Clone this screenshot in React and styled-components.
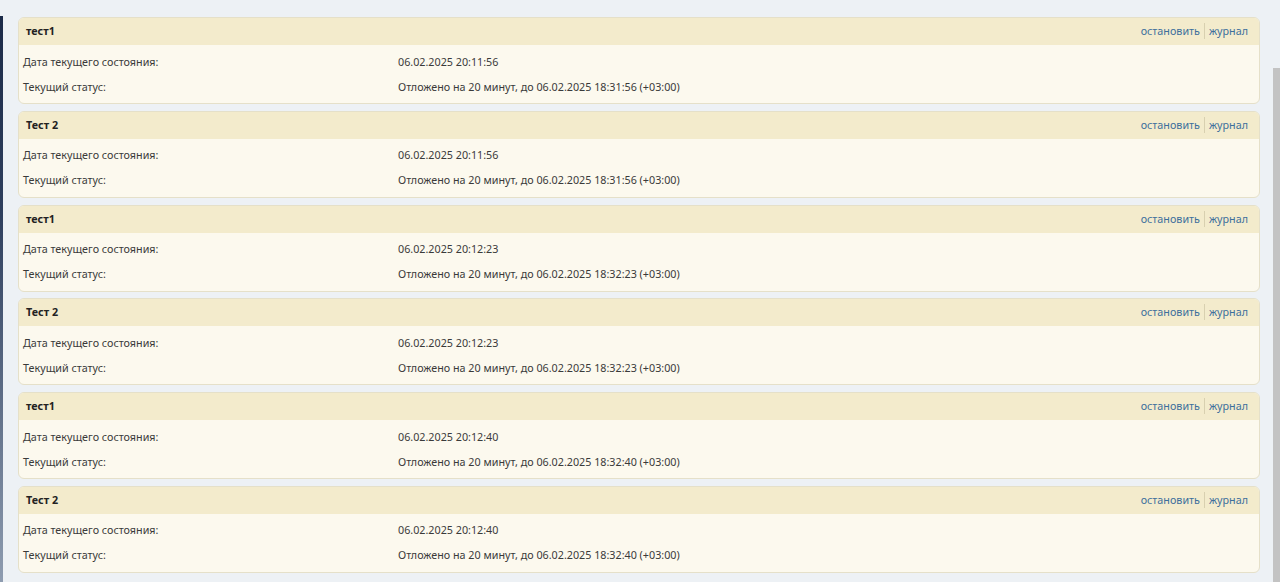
import React from 'react';
import styled, { createGlobalStyle } from 'styled-components';

const GlobalStyle = createGlobalStyle`
  html, body {
    margin: 0;
    padding: 0;
    background: #edf1f5;
    overflow: hidden;
  }
  body {
    font-family: "Noto Sans", "Open Sans", sans-serif;
    font-size: 10.75px;
    color: #333;
  }
`;

const Page = styled.div`
  position: relative;
  height: 582px;
  box-sizing: border-box;
  padding: 17px 20px 0 18px;
  display: flex;
  flex-direction: column;
  gap: 6.8px;

  &::before {
    content: '';
    position: absolute;
    left: 0;
    top: 16px;
    bottom: 0;
    width: 3px;
    background: linear-gradient(#1b2a48 0%, #2e3f5e 35%, #8e9cb0 100%);
  }
`;

const Scrollbar = styled.div`
  position: absolute;
  right: 0;
  top: 68px;
  bottom: 0;
  width: 7px;
  background: #c3c3c3;
`;

const Card = styled.div`
  border: 1px solid #e5e0c9;
  border-radius: 6px;
  background: #fcf9ee;
  overflow: hidden;
`;

const Header = styled.div`
  height: 27px;
  display: flex;
  align-items: center;
  justify-content: space-between;
  padding: 0 11px 1px 7px;
  box-sizing: border-box;
  background: #f3ebcc;
`;

const Title = styled.span`
  font-weight: 700;
  color: #222;
`;

const Actions = styled.div`
  display: flex;
  align-items: center;
`;

const Link = styled.a`
  color: #3d6f9c;
  text-decoration: none;
  cursor: pointer;
  padding: 0 4px;
  line-height: 16px;

  & + & {
    border-left: 1px solid #d8d0b0;
    padding-right: 0;
  }
`;

const Body = styled.div`
  padding: 4px 0 4px 4px;
`;

const Row = styled.div`
  display: grid;
  grid-template-columns: 375px 1fr;
  height: 25px;
  align-items: center;
  color: #3a3a3a;
`;

const items = [
  { title: 'тест1', date: '06.02.2025 20:11:56', until: '06.02.2025 18:31:56' },
  { title: 'Тест 2', date: '06.02.2025 20:11:56', until: '06.02.2025 18:31:56' },
  { title: 'тест1', date: '06.02.2025 20:12:23', until: '06.02.2025 18:32:23' },
  { title: 'Тест 2', date: '06.02.2025 20:12:23', until: '06.02.2025 18:32:23' },
  { title: 'тест1', date: '06.02.2025 20:12:40', until: '06.02.2025 18:32:40' },
  { title: 'Тест 2', date: '06.02.2025 20:12:40', until: '06.02.2025 18:32:40' },
];

const App = () => (
  <>
    <GlobalStyle />
    <Page>
      {items.map((item, i) => (
        <Card key={i}>
          <Header>
            <Title>{item.title}</Title>
            <Actions>
              <Link>остановить</Link>
              <Link>журнал</Link>
            </Actions>
          </Header>
          <Body>
            <Row>
              <span>Дата текущего состояния:</span>
              <span>{item.date}</span>
            </Row>
            <Row>
              <span>Текущий статус:</span>
              <span>Отложено на 20 минут, до {item.until} (+03:00)</span>
            </Row>
          </Body>
        </Card>
      ))}
      <Scrollbar />
    </Page>
  </>
);

export default App;
